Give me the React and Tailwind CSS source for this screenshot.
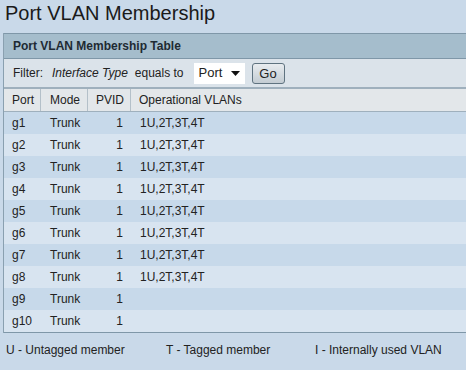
import React from 'react';

const rows = [
    { port: 'g1', mode: 'Trunk', pvid: 1, vlans: '1U,2T,3T,4T' },
    { port: 'g2', mode: 'Trunk', pvid: 1, vlans: '1U,2T,3T,4T' },
    { port: 'g3', mode: 'Trunk', pvid: 1, vlans: '1U,2T,3T,4T' },
    { port: 'g4', mode: 'Trunk', pvid: 1, vlans: '1U,2T,3T,4T' },
    { port: 'g5', mode: 'Trunk', pvid: 1, vlans: '1U,2T,3T,4T' },
    { port: 'g6', mode: 'Trunk', pvid: 1, vlans: '1U,2T,3T,4T' },
    { port: 'g7', mode: 'Trunk', pvid: 1, vlans: '1U,2T,3T,4T' },
    { port: 'g8', mode: 'Trunk', pvid: 1, vlans: '1U,2T,3T,4T' },
    { port: 'g9', mode: 'Trunk', pvid: 1, vlans: '' },
    { port: 'g10', mode: 'Trunk', pvid: 1, vlans: '' },
];

const App = () => {
    return (
        <div className="w-[466px] h-[370px] bg-[#c9d9e9] text-[12px] text-[#222] overflow-hidden" style={{ fontFamily: '"Liberation Sans", Arial, sans-serif' }}>
            <h1 className="text-[20px] leading-[26px] pl-[5px] h-[33px] text-[#1a1a1a]">Port VLAN Membership</h1>

            <div className="ml-[3px] border-l border-[#8aa0b0]">
                <div className="h-[26px] bg-[#a5bdcc] border-y border-[#7f97a8] flex items-center pl-[9px] font-bold text-[#1e2a33]">
                    Port VLAN Membership Table
                </div>

                <div className="h-[30px] bg-[#dbe3ea] flex items-center pl-[9px] border-b-2 border-[#9fb0bd]">
                    <span>Filter:</span>
                    <span className="italic ml-[9px]">Interface Type</span>
                    <span className="ml-[7px]">equals to</span>
                    <div className="ml-[10px] w-[51px] h-[21px] bg-white flex items-center justify-between pl-[5px] pr-[5px] text-[13px]">
                        <span>Port</span>
                        <svg width="9" height="5" viewBox="0 0 9 5"><path d="M0 0h9L4.5 5z" fill="#111" /></svg>
                    </div>
                    <button className="ml-[7px] w-[33px] h-[21px] rounded-[3px] border border-[#5f7380] bg-gradient-to-b from-[#e8ecef] to-[#c3ccd3] text-[13px] leading-none">Go</button>
                </div>

                <div className="h-[23px] bg-[#e3e7ea] flex items-center border-b border-[#9fb0bd]">
                    <div className="w-[37px] h-full flex items-center pl-[8px] border-r border-[#b4c0c9]">Port</div>
                    <div className="w-[47px] h-full flex items-center pl-[9px] border-r border-[#b4c0c9]">Mode</div>
                    <div className="w-[43px] h-full flex items-center pl-[8px] border-r border-[#b4c0c9]">PVID</div>
                    <div className="flex-1 h-full flex items-center pl-[8px]">Operational VLANs</div>
                </div>

                {rows.map((r, i) => (
                    <div key={r.port} className={`h-[22px] flex items-center ${i % 2 === 0 ? 'bg-[#c7d9ea]' : 'bg-[#d8e4f0]'}`}>
                        <div className="w-[37px] pl-[8px]">{r.port}</div>
                        <div className="w-[47px] pl-[9px]">{r.mode}</div>
                        <div className="w-[43px] text-right pr-[8px]">{r.pvid}</div>
                        <div className="flex-1 pl-[9px]">{r.vlans}</div>
                    </div>
                ))}
                <div className="border-t border-[#7f97a8]" />
            </div>

            <div className="flex items-center h-[34px] pl-[6px]">
                <span className="w-[160px]">U - Untagged member</span>
                <span className="w-[149px]">T - Tagged member</span>
                <span>I - Internally used VLAN</span>
            </div>
        </div>
    );
};

export default App;
